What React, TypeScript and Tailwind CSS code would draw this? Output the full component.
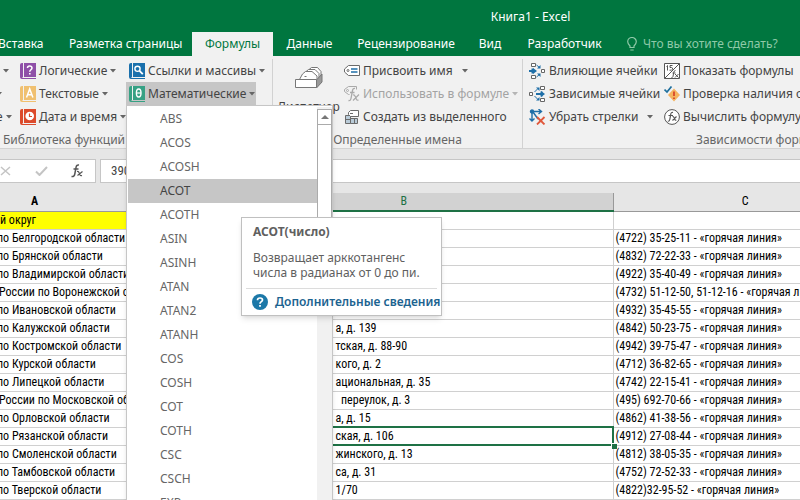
import type { ReactNode } from "react";

const functions = [
  "ABS", "ACOS", "ACOSH", "ACOT", "ACOTH", "ASIN", "ASINH", "ATAN", "ATAN2",
  "ATANH", "COS", "COSH", "COT", "COTH", "CSC", "CSCH", "EXP",
];

const rows = [
  { a: "по Белгородской области", b: "", c: "(4722) 35-25-11 - «горячая линия»" },
  { a: "по Брянской области", b: "", c: "(4832) 72-22-33 - «горячая линия»" },
  { a: "по Владимирской области", b: "", c: "(4922) 35-40-49 - «горячая линия»" },
  { a: "России по Воронежской области", b: "", c: "(4732) 51-12-50, 51-12-16 - «горячая линия»" },
  { a: "по Ивановской области", b: "", c: "(4932) 35-45-55 - «горячая линия»" },
  { a: "по Калужской области", b: "а, д. 139", c: "(4842) 50-23-75 - «горячая линия»" },
  { a: "по Костромской области", b: "тская, д. 88-90", c: "(4942) 39-75-47 - «горячая линия»" },
  { a: "по Курской области", b: "кого, д. 2", c: "(4712) 36-82-65 - «горячая линия»" },
  { a: "по Липецкой области", b: "ациональная, д. 35", c: "(4742) 22-15-41 - «горячая линия»" },
  { a: "России по Московской области", b: "\u00a0 переулок, д. 3", c: "(495) 692-70-66 - «горячая линия»" },
  { a: "по Орловской области", b: "а, д. 15", c: "(4862) 41-38-56 - «горячая линия»" },
  { a: "по Рязанской области", b: "ская, д. 106", c: "(4912) 27-08-44 - «горячая линия»", selected: true },
  { a: "по Смоленской области", b: "жинского, д. 13", c: "(4812) 38-05-35 - «горячая линия»" },
  { a: "по Тамбовской области", b: "са, д. 31", c: "(4752) 72-52-33 - «горячая линия»" },
  { a: "по Тверской области", b: "1/70", c: "(4822)32-95-52 - «горячая линия»" },
  { a: "", b: "", c: "" },
];

function Caret({ className = "text-[#666]" }: { className?: string }) {
  return (
    <svg viewBox="0 0 6 4" className={`h-1 w-1.5 shrink-0 ${className}`} fill="currentColor">
      <path d="M0 0h6L3 3.6z" />
    </svg>
  );
}

function Book({ color, children }: { color: string; children: ReactNode }) {
  return (
    <svg viewBox="0 0 16 16" className="size-4 shrink-0">
      <path d="M2 0h14v14H2.5v1H16v1H2q-2 0-2-2V2q0-2 2-2z" fill={color} />
      <path d="M3.5 0v14" stroke="#f1f1f1" />
      {children}
    </svg>
  );
}

function LogicIcon() {
  return (
    <Book color="#8f4fa8">
      <path d="M7.5 5q0-2 2.2-2T12 5c0 1.700-2.300 1.800-2.300 3.800" fill="none" stroke="#fff" strokeWidth="1.500" />
      <path d="M9 10h1.600v1.600H9z" fill="#fff" />
    </Book>
  );
}

function TextIcon() {
  return (
    <Book color="#f0c070">
      <path d="M6.500 11.500 9.700 3l3.200 8.500M7.600 8.700h4.200" fill="none" stroke="#fff" strokeWidth="1.500" />
    </Book>
  );
}

function DateIcon() {
  return (
    <Book color="#dc4a2b">
      <circle cx="9.700" cy="7" r="4.300" fill="#fff" />
      <path d="M9.500 4.500v3H12" fill="none" stroke="#dc4a2b" strokeWidth="1.200" />
    </Book>
  );
}

function LookupIcon() {
  return (
    <Book color="#1a70ac">
      <circle cx="8.500" cy="5.800" r="2.600" fill="none" stroke="#fff" strokeWidth="1.400" />
      <path d="m10.500 7.800 3.300 3.300" stroke="#fff" strokeWidth="1.800" />
    </Book>
  );
}

function MathIcon() {
  return (
    <Book color="#36a184">
      <ellipse cx="9.700" cy="7" rx="2.300" ry="4" fill="none" stroke="#fff" strokeWidth="1.400" />
      <path d="M7.500 7H12" stroke="#fff" strokeWidth="1.200" />
    </Book>
  );
}

function TagIcon() {
  return (
    <svg viewBox="0 0 16 16" className="size-4 shrink-0" fill="none" stroke="#6b6b6b">
      <path d="M4.500 2.500h11v10h-11l-4-3.500V6z" fill="#fff" />
      <circle cx="4" cy="7.500" r="1" />
      <path d="M7 6h6.500M7 9h6.500" stroke="#1f6fa8" strokeWidth="1.300" />
    </svg>
  );
}

function UseIcon() {
  return (
    <svg viewBox="0 0 16 16" className="size-4 shrink-0" fill="none" stroke="#a9a9a9">
      <path d="M5.500 8.500h-1l-4-3v-2l4-3h8v3" />
      <circle cx="3.500" cy="4.500" r="1" />
      <path d="M11 2.500q-2-.5-2.500 2L7 12.500q-.5 2.500-2.500 2M6 6.500h4.500" strokeWidth="1.300" />
      <path d="M9 9q1.500-.5 2 1l1.500 3.500q.5 1 2 .5M15 8.500 9 14.500" strokeWidth="1.200" />
    </svg>
  );
}

function CreateIcon() {
  return (
    <svg viewBox="0 0 16 16" className="size-4 shrink-0" fill="none" stroke="#6b6b6b">
      <path d="M1.500 6.500h5v8h-5z" fill="#b9cbd8" />
      <path d="M6.500 9.500h7v5h-7z" fill="#b9cbd8" />
      <path d="M10.500 9.500v5M1.500 10.500h5" />
      <path d="M6.500 1.500h8v6h-8l-2-2v-2z" fill="#fff" />
      <path d="M6 4.500h3" />
    </svg>
  );
}

function PrecedentsIcon() {
  return (
    <svg viewBox="0 0 17 16" className="h-4 w-[17px] shrink-0" fill="none" stroke="#666">
      <path d="M2.500.5h4v3h-4zM2.500 12.500h4v3h-4zM12.500 6.500h3v3h-3z" fill="#fff" />
      <path d="M0 8h6M3.500 5.500v5" stroke="#1f6fa8" strokeWidth="2" />
      <path d="M4 5l4 3-4 3zM11.500 2v3.500H8zM11.500 14v-3.500H8z" fill="#1f6fa8" stroke="none" />
      <path d="m7.500 2 3 2.500M7.500 14l3-2.500" stroke="#1f6fa8" />
    </svg>
  );
}

function DependentsIcon() {
  return (
    <svg viewBox="0 0 17 16" className="h-4 w-[17px] shrink-0" fill="none" stroke="#666">
      <path d="M11.500.5h4v3h-4zM11.500 12.500h4v3h-4zM.5 6.500h3v3h-3z" fill="#fff" />
      <path d="M7 8h6M12.500 5.500v5" stroke="#1f6fa8" strokeWidth="2" />
      <path d="M12 5l4 3-4 3zM7 1.500h3.500V5zM7 14.500h3.500V11z" fill="#1f6fa8" stroke="none" />
      <path d="m5.500 6 3-3M5.500 10l3 3" stroke="#1f6fa8" />
    </svg>
  );
}

function RemoveArrowsIcon() {
  return (
    <svg viewBox="0 0 17 16" className="h-4 w-[17px] shrink-0" fill="none" stroke="#1f6fa8" strokeWidth="1.400">
      <path d="M3 2v10M.5 9.500 3 12l2.500-2.500M3 2.500h9M9.500 0l3 2.500-3 2.500M4 3l5 7" />
      <circle cx="3" cy="2.500" r="1.500" fill="#1f6fa8" />
      <path d="m8 8 7.500 7.500M15.500 8 8 15.500" stroke="#e0583b" strokeWidth="1.800" />
    </svg>
  );
}

function ShowFormulasIcon() {
  return (
    <svg viewBox="0 0 16 16" className="size-4 shrink-0" fill="none" stroke="#555">
      <path d="M.5.5h15v15H.5z" fill="#fff" />
      <path d="M15.500.5l-15 15" />
      <path d="M3.500 2.500v5M2.500 3.500l1-1M8.500 2.500h-2.500v2h1.500q1.500.2 1 1.700t-3 1M11.500 7.500q-1.500 0-1.800 2l-.7 4q-.2 1-1.500 1M8.500 10h3M11 11l3.500 3.500M14.500 11 11 14.500" />
    </svg>
  );
}

function ErrorCheckIcon() {
  return (
    <svg viewBox="0 0 16 16" className="size-4 shrink-0">
      <path d="M10 2.500 16 9l-6 6.500L4 9z" fill="#f5b45f" />
      <path d="M10 5.500v4.500M10 11.500v1.500" stroke="#d8472b" strokeWidth="1.800" />
      <path d="M.5 3.500 3 6l4.500-5.500" fill="none" stroke="#1f6f9c" strokeWidth="1.700" />
    </svg>
  );
}

function EvaluateIcon() {
  return (
    <svg viewBox="0 0 16 16" className="size-4 shrink-0" fill="none" stroke="#555">
      <circle cx="8" cy="8" r="7.400" fill="#fff" />
      <path d="M9 3.500q-1.800-.5-2.200 1.500L5.800 10.500q-.4 2-2 1.700M4.500 6.500H9" strokeWidth="1.200" />
      <path d="M8.500 7.500q1-.3 1.500 1l.8 2q.4 1 1.500.5M12.500 7.500l-4 4" strokeWidth="1.100" />
    </svg>
  );
}

function NameManagerIcon() {
  return (
    <svg viewBox="0 0 28 22" className="h-[22px] w-7 shrink-0" fill="#fff" stroke="#777">
      <path d="M10.500 10 13.500 3l3-2.500h6l3.500 4V14l-5 5z" />
      <path d="M7.500 10 10.500 5l3-2.500h6.500l4 4V15" />
      <path d="M4.500 12.500 7.500 7l3-2.500h6.500l5 4.500v4" />
      <path d="M21.500 13l5.500-6v8l-5.500 6z" fill="#999" />
      <path d="M.5 12.500h21v8H.5z" />
      <path d="M9.500 9.500h2" />
    </svg>
  );
}

function FxIcon() {
  return (
    <svg viewBox="0 0 14 14" className="size-3.5" fill="none" stroke="#555">
      <path d="M9 1Q6.500.5 6 3.500L4.800 10q-.5 3-3.300 2.500M3.500 5h5" strokeWidth="1.500" />
      <path d="M7 7.500q1.500-.5 2 1L10 11q.5 1 2 .5M12.500 7.500l-5 4" strokeWidth="1.200" />
    </svg>
  );
}

type ToolProps = {
  icon?: ReactNode;
  label: string;
  caret?: "near" | "far";
  disabled?: boolean;
};

function Tool({ icon, label, caret, disabled }: ToolProps) {
  return (
    <button
      type="button"
      disabled={disabled}
      className="flex h-[23px] items-center gap-[3px] whitespace-nowrap disabled:text-[#a3a3a3]"
    >
      {icon}
      <span>{label}</span>
      {caret === "near" && <Caret className={disabled ? "text-[#b5b5b5]" : "text-[#666]"} />}
      {caret === "far" && <span className="pl-1.5"><Caret /></span>}
    </button>
  );
}

function FunctionMenu() {
  return (
    <div className="absolute top-full left-0 z-20 flex h-[420px] w-[207px] border border-[#c6c6c6] bg-white pt-px pl-px shadow-md">
      <ul className="flex-1 text-[#666]">
        {functions.map((name) => (
          <li key={name} className="relative">
            <button
              type="button"
              className={`block h-6 w-full pl-8 text-left text-xs ${name === "ACOT" ? "bg-[#c6c6c6] text-[#444]" : ""}`}
            >
              {name}
            </button>
            {name === "ACOT" && <FunctionTip />}
          </li>
        ))}
      </ul>
      <div className="flex w-[15px] flex-col bg-[#f1f1f1] pt-0.5">
        <button type="button" aria-label="Вверх" className="flex h-4 items-center justify-center border border-[#ababab] bg-white">
          <svg viewBox="0 0 8 4" className="h-1 w-2" fill="#777"><path d="M0 4h8L4 0z" /></svg>
        </button>
        <div className="h-[180px] border border-t-0 border-[#ababab] bg-white" />
      </div>
    </div>
  );
}

function FunctionTip() {
  return (
    <div role="tooltip" className="absolute top-[38px] left-[113px] z-30 w-[201px] border border-[#c0c0c0] bg-white px-1 text-[#606060] shadow-md">
      <div className="px-[7px] pt-1.5 pb-2 text-xs">
        <h2 className="font-bold">ACOT(число)</h2>
        <p className="pt-2.5 leading-[15px]">
          Возвращает арккотангенс
          <br />
          числа в радианах от 0 до пи.
        </p>
      </div>
      <a href="#help" className="flex h-[27px] items-center gap-[7px] border-t border-[#dcdcdc] pl-1.5 text-xs font-semibold whitespace-nowrap text-[#1c6390]">
        <svg viewBox="0 0 16 16" className="size-4 shrink-0">
          <circle cx="8" cy="8" r="8" fill="#1c78a8" />
          <path d="M5.500 6.200Q5.500 4 8 4t2.500 2C10.500 7.700 8 7.700 8 9.700" fill="none" stroke="#fff" strokeWidth="1.700" />
          <path d="M7.100 11h1.800v1.800H7.100z" fill="#fff" />
        </svg>
        Дополнительные сведения
      </a>
    </div>
  );
}

function Tabs() {
  return (
    <nav className="flex h-6 items-center text-xs whitespace-nowrap text-white">
      <button type="button" className="-ml-0.5 w-[42px] text-left">Вставка</button>
      <button type="button" className="w-[152px] pl-[29px] text-left">Разметка страницы</button>
      <button type="button" className="h-full w-[81px] bg-[#f1f1f1] text-[#00763f]">Формулы</button>
      <button type="button" className="w-[73px]">Данные</button>
      <button type="button" className="w-[120px]">Рецензирование</button>
      <button type="button" className="w-12">Вид</button>
      <button type="button" className="w-[101px]">Разработчик</button>
      <button type="button" className="flex items-center gap-1.5 pl-3 text-[#8fc9a8]">
        <svg viewBox="0 0 10 14" className="h-3.5 w-2.5" fill="none" stroke="currentColor" strokeWidth="1.200">
          <path d="M3 10.500V9C1.500 7.500.7 6.500.7 4.800a4.300 4.300 0 0 1 8.600 0C9.300 6.500 8.500 7.500 7 9v1.500zM3.300 13h3.400" />
        </svg>
        Что вы хотите сделать?
      </button>
    </nav>
  );
}

function Ribbon() {
  return (
    <div className="flex h-[93px] border-b border-[#d2d2d2] bg-[#f1f1f1] pt-[3px] text-xs text-[#444]">
      <section className="w-[272px] shrink-0">
        <div className="flex">
          <div className="flex w-5 shrink-0 flex-col">
            <span className="flex h-[23px] items-center pl-[3px]"><Caret /></span>
            <span className="-ml-1 flex h-[23px] items-center"><Caret /></span>
            <span className="-ml-1 flex h-[23px] items-center gap-[3px]">е<Caret /></span>
          </div>
          <div className="w-[106px] shrink-0">
            <Tool icon={<LogicIcon />} label="Логические" caret="near" />
            <Tool icon={<TextIcon />} label="Текстовые" caret="near" />
            <Tool icon={<DateIcon />} label="Дата и время" caret="near" />
          </div>
          <div className="shrink-0">
            <div className="pl-[3px]">
              <Tool icon={<LookupIcon />} label="Ссылки и массивы" caret="near" />
            </div>
            <div className="relative">
              <div className="w-[130px] bg-[#c6c6c6] pl-[3px]">
                <Tool icon={<MathIcon />} label="Математические" caret="near" />
              </div>
              <FunctionMenu />
            </div>
          </div>
        </div>
        <p className="pl-[3px] leading-6 whitespace-nowrap text-[#666]">Библиотека функций</p>
      </section>
      <section className="w-[250px] shrink-0 border-l border-[#d2d2d2]">
        <div className="flex h-[69px]">
          <button type="button" className="flex w-[71px] shrink-0 flex-col items-center gap-2.5 pt-2">
            <NameManagerIcon />
            <span>Диспетчер</span>
          </button>
          <div>
            <Tool icon={<TagIcon />} label="Присвоить имя" caret="far" />
            <Tool icon={<UseIcon />} label="Использовать в формуле" caret="near" disabled />
            <Tool icon={<CreateIcon />} label="Создать из выделенного" />
          </div>
        </div>
        <p className="text-center leading-6 whitespace-nowrap text-[#666]">Определенные имена</p>
      </section>
      <section className="w-[480px] shrink-0 border-l border-[#d2d2d2] pl-1.5">
        <div className="flex">
          <div className="w-[135px] shrink-0">
            <Tool icon={<PrecedentsIcon />} label="Влияющие ячейки" />
            <Tool icon={<DependentsIcon />} label="Зависимые ячейки" />
            <Tool icon={<RemoveArrowsIcon />} label="Убрать стрелки" caret="far" />
          </div>
          <div>
            <Tool icon={<ShowFormulasIcon />} label="Показать формулы" />
            <Tool icon={<ErrorCheckIcon />} label="Проверка наличия ошибок" />
            <Tool icon={<EvaluateIcon />} label="Вычислить формулу" />
          </div>
        </div>
        <p className="pl-[167px] leading-6 whitespace-nowrap text-[#666]">Зависимости формул</p>
      </section>
    </div>
  );
}

function FormulaBar() {
  return (
    <div className="flex h-11 gap-1 bg-[#e6e6e6] py-2.5">
      <div className="flex w-24 shrink-0 items-center border border-l-0 border-[#c6c6c6] bg-white">
        <button type="button" aria-label="Отмена" className="w-[11px]">
          <svg viewBox="0 0 11 10" className="h-2.5 w-[11px]" stroke="#c4c4c4" strokeWidth="1.500"><path d="m1 1 9 8M10 1 1 9" /></svg>
        </button>
        <button type="button" aria-label="Ввод" className="ml-6">
          <svg viewBox="0 0 13 10" className="h-2.5 w-[13px]" fill="none" stroke="#c4c4c4" strokeWidth="2"><path d="m1 5.500 3.500 3.500L12 1" /></svg>
        </button>
        <button type="button" aria-label="Вставить функцию" className="ml-[22px]"><FxIcon /></button>
      </div>
      <input
        aria-label="Строка формул"
        defaultValue="390"
        className="min-w-0 flex-1 border border-r-0 border-[#c6c6c6] bg-white pl-2.5 font-['Roboto_Condensed',Roboto,sans-serif] text-[13px] text-[#444]"
      />
    </div>
  );
}

function Sheet() {
  return (
    <table className="w-full min-w-[877px] table-fixed border-collapse bg-white font-['Roboto_Condensed',Roboto,sans-serif] text-xs leading-[17px] whitespace-nowrap text-black">
      <colgroup>
        <col className="w-[195px]" />
        <col className="w-[418px]" />
        <col />
      </colgroup>
      <thead>
        <tr className="h-[18px] bg-[#e6e6e6]">
          <th className="border-b border-[#999] p-0 pl-[31px] text-left">A</th>
          <th className="border-b-2 border-[#1e7145] bg-[#d2d2d2] p-0 font-normal text-[#1e7145]">B</th>
          <th className="border-b border-l border-[#999] p-0 font-normal">C</th>
        </tr>
      </thead>
      <tbody>
        <tr className="h-[18px]">
          <td className="border-b border-[#d0d0d0] bg-[#ff0] p-0">й округ</td>
          <td className="border border-[#d0d0d0] p-0" />
          <td className="border-b border-[#d0d0d0] p-0" />
        </tr>
        {rows.map((row, i) => (
          <tr key={i} className="h-[18px]">
            <td className="overflow-hidden border-b border-[#d0d0d0] p-0">
              <span className={row.a.startsWith("по") ? "-ml-[3px]" : "-ml-px"}>{row.a}</span>
            </td>
            <td className={`relative border border-[#d0d0d0] p-0 pl-[140px] ${row.selected ? "outline-2 -outline-offset-1 outline-[#1e7145]" : ""}`}>
              {row.b}
              {row.selected && <span className="absolute -right-1 -bottom-1 size-1.5 border-t border-l border-white bg-[#1e7145]" />}
            </td>
            <td className="border-b border-[#d0d0d0] p-0 pl-0.5">{row.c}</td>
          </tr>
        ))}
      </tbody>
    </table>
  );
}

export default function App() {
  return (
    <div className="h-screen overflow-hidden bg-[#e6e6e6] font-['Noto_Sans',sans-serif]">
      <header className="bg-[#00763f]">
        <h1 className="h-8 pt-2 pl-[261px] text-center text-xs leading-[18px] text-white">Книга1 - Excel</h1>
        <Tabs />
      </header>
      <Ribbon />
      <FormulaBar />
      <Sheet />
    </div>
  );
}
